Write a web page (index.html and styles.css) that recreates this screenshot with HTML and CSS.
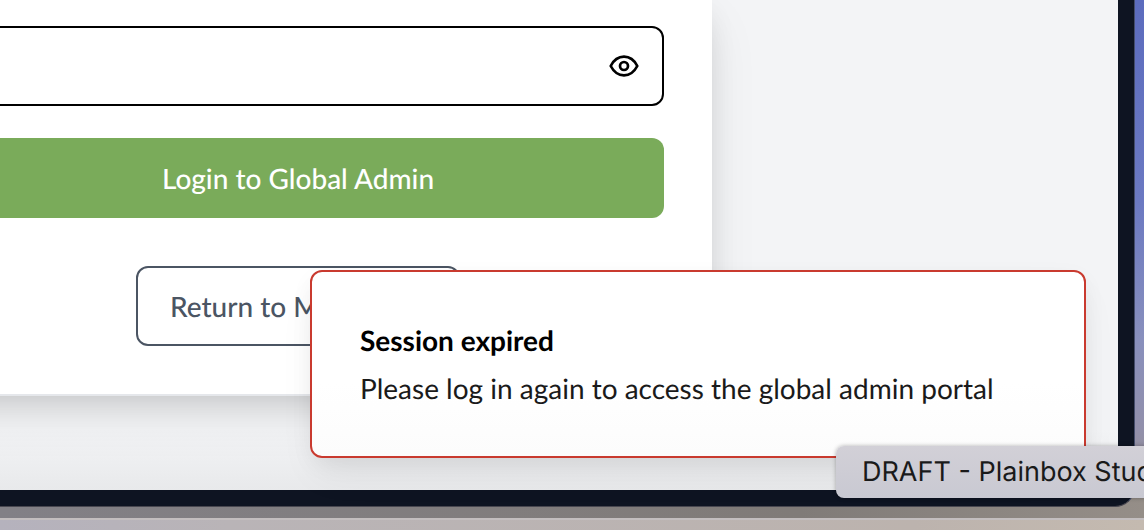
FILE: index.html
```html
<!DOCTYPE html>
<html lang="en">
<head>
<meta charset="utf-8">
<meta name="viewport" content="width=device-width, initial-scale=1">
<title>Global Admin Login</title>
<link rel="stylesheet" href="styles.css">
</head>
<body>
<div class="desktop">
  <div class="window">
    <main class="page">
      <form class="card">
        <div class="field">
          <input class="field-input" type="password" aria-label="Password">
          <button class="reveal" type="button" aria-label="Show password">
            <svg class="eye" viewBox="0 0 32 32" fill="none" stroke="currentColor" stroke-width="2.700" stroke-linejoin="round" aria-hidden="true">
              <path d="M2.700 16C6 9.600 10.800 6.700 16 6.700S26 9.600 29.300 16C26 22.400 21.200 25.300 16 25.300S6 22.400 2.700 16Z"/>
              <circle cx="16" cy="16" r="4"/>
            </svg>
          </button>
        </div>
        <button class="button primary" type="submit">Login to Global Admin</button>
        <button class="button outline" type="button">Return to Main Site</button>
      </form>
    </main>
  </div>
  <div class="dock"></div>
  <section class="toast" role="alert">
    <h2 class="toast-title">Session expired</h2>
    <p class="toast-text">Please log in again to access the global admin portal</p>
  </section>
  <div class="tooltip" role="tooltip">DRAFT - Plainbox Studio</div>
</div>
</body>
</html>
```
FILE: styles.css
```css
* {
  box-sizing: border-box;
}

body {
  margin: 0;
  font-family: Lato, "Liberation Sans", sans-serif;
  font-size: 28px;
  color: #1a1a1a;
  text-rendering: geometricPrecision;
}

.desktop {
  position: relative;
  display: flex;
  flex-direction: column;
  min-height: 100vh;
  overflow: hidden;
  background:
    linear-gradient(180deg, #5c6cbe 0, #6b79c2 200px, #8990bd 340px, #9290ab 430px, transparent 500px) right / 10px 100% no-repeat,
    linear-gradient(90deg, #828086, #807b78 70%, #958e88);
}

.window {
  margin-right: 9px;
  padding: 0 16px 16px 0;
  background: #0e1422;
  border-right: 1px solid #454d6b;
  border-bottom: 1px solid #484750;
  border-bottom-right-radius: 20px;
}

.page {
  padding: 0 406px 94px 0;
  background: linear-gradient(0deg, #e8e9eb, #f3f4f6 60px);
  overflow: hidden;
}

.card {
  display: flex;
  flex-direction: column;
  margin-left: -116px;
  padding: 26px 48px 48px;
  background: #fff;
  border-bottom: 2px solid #e5e7eb;
  box-shadow: 0 20px 50px -6px rgba(0, 0, 0, 0.1), 0 10px 28px -6px rgba(0, 0, 0, 0.12);
}

.field {
  display: flex;
  align-items: center;
  height: 80px;
  padding-right: 22px;
  border: 2px solid #000;
  border-radius: 12px;
}

.field-input {
  flex: 1;
  min-width: 0;
  height: 100%;
  padding: 0 24px;
  border: 0;
  outline: 0;
  background: none;
  font: inherit;
}

.reveal {
  display: flex;
  padding: 0;
  border: 0;
  background: none;
  color: #000;
}

.eye {
  width: 32px;
  height: 32px;
}

.button {
  height: 80px;
  padding: 0 32px;
  border-radius: 12px;
  font: inherit;
  font-weight: 500;
  text-rendering: inherit;
}

.primary {
  margin-top: 32px;
  border: 0;
  background: #7aab5a;
  color: #fff;
}

.outline {
  align-self: center;
  width: 324px;
  margin-top: 48px;
  border: 2px solid #4b5563;
  background: #fff;
  color: #4b5563;
  text-align: left;
  white-space: nowrap;
}

.dock {
  flex: 1;
  min-height: 12px;
  margin-top: 11px;
  border-top: 2px solid #c3bebf;
  background: linear-gradient(90deg, #b5b2bd, #b9b4b7 20%, #bcb3ae 80%, #c4bab0);
}

.toast {
  position: absolute;
  top: 270px;
  right: 58px;
  width: 776px;
  padding: 44px 48px;
  border: 2px solid #c93a2f;
  border-radius: 12px;
  background: linear-gradient(#fff 60%, #fcfcfc);
  box-shadow: 0 20px 40px -6px rgba(0, 0, 0, 0.06), 0 8px 24px -4px rgba(0, 0, 0, 0.08);
  line-height: 48px;
}

.toast-title {
  margin: 0;
  color: #000;
  font-size: 28px;
  font-weight: 700;
}

.toast-text {
  margin: 0;
}

.tooltip {
  position: absolute;
  top: 446px;
  left: calc(100% - 308px);
  padding: 0 26px;
  border-radius: 8px;
  background: linear-gradient(#d2d0d7, #c9c9d2);
  box-shadow: 0 0 4px rgba(0, 0, 0, 0.3);
  font-family: Inter, sans-serif;
  font-size: 27px;
  line-height: 52px;
  white-space: nowrap;
}
```
